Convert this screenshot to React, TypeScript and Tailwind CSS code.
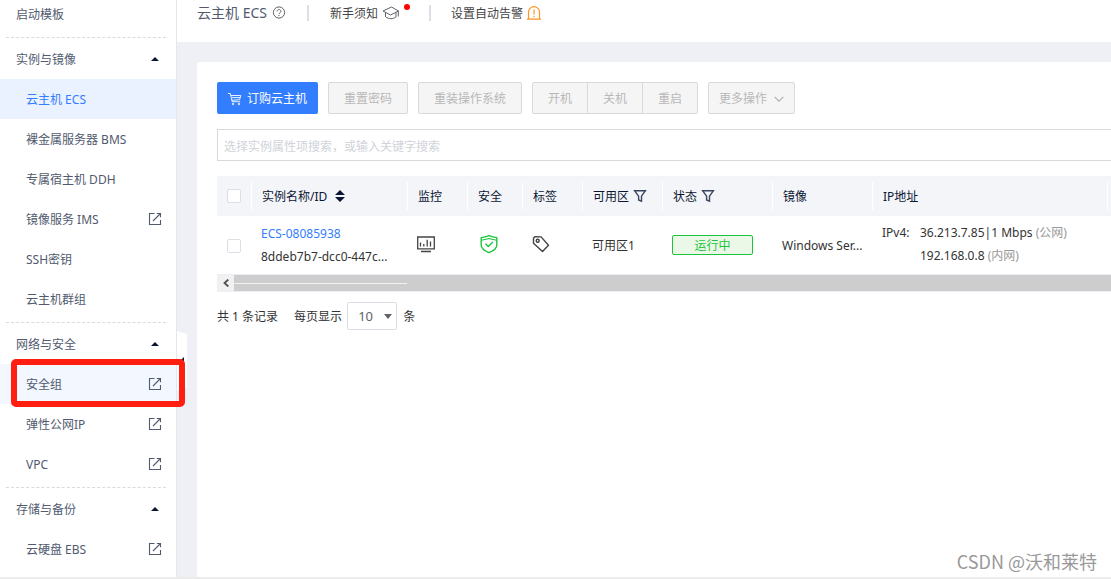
import type { ReactNode } from 'react'

const menu = [
  {
    title: '实例与镜像',
    items: [
      { name: '云主机 ECS', active: true },
      { name: '裸金属服务器 BMS' },
      { name: '专属宿主机 DDH' },
      { name: '镜像服务 IMS', external: true },
      { name: 'SSH密钥' },
      { name: '云主机群组' },
    ],
  },
  {
    title: '网络与安全',
    items: [
      { name: '安全组', external: true, marked: true },
      { name: '弹性公网IP', external: true },
      { name: 'VPC', external: true },
    ],
  },
  {
    title: '存储与备份',
    items: [{ name: '云硬盘 EBS', external: true }],
  },
]

type Item = { name: string; active?: boolean; external?: boolean; marked?: boolean }

const ExternalIcon = () => (
  <svg className="h-3.5 w-3.5" viewBox="0 0 14 14" fill="none" stroke="#515a6e" strokeWidth="1.1">
    <path d="M6.5 1.500H1.500v11h11V8" />
    <path d="M5 9l7.500-7.500M8.800 1.500h3.700v3.700" />
  </svg>
)

const FilterIcon = () => (
  <svg className="h-3.5 w-3.5" viewBox="0 0 14 14" fill="none" stroke="#3a4560" strokeWidth="1.4">
    <path d="M1.6 1.7h10.8L8.5 7.2v5L5.6 11V7.2z" />
  </svg>
)

const Divider = () => (
  <div className="pt-[3px] pb-px pl-1.5 pr-2.5">
    <div className="border-t border-dashed border-[#d8dadf]" />
  </div>
)

const MenuItem = ({ name, active, external, marked }: Item) => {
  const state = active
    ? 'bg-[#eaf1ff] text-[#337dff]'
    : marked
      ? 'bg-[#f3f7ff] text-[#515a6e]'
      : 'text-[#515a6e]'
  return (
    <li className="relative">
      <a href="#" className={`flex h-10 items-center justify-between pl-[26px] pr-3.5 ${state}`}>
        <span className="pt-0.5">{name}</span>
        {external && <ExternalIcon />}
      </a>
      {marked && (
        <div className="pointer-events-none absolute -top-[5px] -bottom-[3px] left-[11px] -right-[9px] z-20 rounded-[5px] border-6 border-[#ff1e10]" />
      )}
    </li>
  )
}

const Sidebar = () => (
  <nav className="relative w-[177px] shrink-0 border-r border-[#e4e7ed] bg-white">
    <a href="#" className="mb-1.5 flex h-7 items-center pt-0.5 pl-4 text-[#515a6e]">启动模板</a>
    {menu.map((group) => (
      <section key={group.title}>
        <Divider />
        <button type="button" className="flex h-10 w-full items-center justify-between pl-4 pr-[17px] text-[#515a6e]">
          <span className="pt-0.5">{group.title}</span>
          <svg className="h-1 w-2" viewBox="0 0 8 4"><path d="M4 0l4 4H0z" fill="#0b1633" /></svg>
        </button>
        <ul>
          {group.items.map((item) => <MenuItem key={item.name} {...item} />)}
        </ul>
      </section>
    ))}
    <button type="button" aria-label="收起菜单" className="absolute top-[331px] left-full z-10 ml-px">
      <svg className="h-15 w-2.5" viewBox="0 0 10 60">
        <path d="M0 0l10 3v54L0 60z" fill="#fff" />
        <path d="M7 26v8l-4-4z" fill="#0b1633" />
      </svg>
    </button>
  </nav>
)

const Header = () => (
  <header className="flex h-[42px] items-start bg-white pl-5 text-[#515a6e]">
    <div className="flex h-[26px] items-center">
      <h1 className="text-sm text-[#515a6e]">云主机 ECS</h1>
      <svg className="ml-[5px] h-3.5 w-3.5" viewBox="0 0 14 14" fill="none" stroke="#606266">
        <circle cx="7" cy="6.5" r="5.6" />
        <path d="M5.1 5.4c0-2.5 3.8-2.4 3.8 0 0 1.4-1.9 1.3-1.9 2.8M7 9v1.1" />
      </svg>
      <div className="mx-[21px] h-4 w-0.5 bg-[#dcdfe6]" />
      <a href="#" className="flex items-center text-[#444]">
        <span className="pt-0.5">新手须知</span>
        <svg className="ml-1 h-4 w-[18px]" viewBox="0 0 18 16" fill="none" stroke="#606266" strokeLinejoin="round">
          <path d="M1 6l8.500-4L16.500 6 8.500 10z" />
          <path d="M3.500 7.500v4.300c3.400 2.600 7.400 2.400 10.500 0V7.500M16.300 6v5.500" />
        </svg>
        <span className="mb-3 ml-1 h-1.5 w-1.5 rounded-full bg-[#f00]" />
      </a>
      <div className="mx-[19px] h-4 w-0.5 bg-[#dcdfe6]" />
      <a href="#" className="flex items-center pl-px text-[#444]">
        <span className="pt-0.5">设置自动告警</span>
        <svg className="ml-1 h-3.5 w-3.5" viewBox="0 0 14 14" fill="none" stroke="#ff9421" strokeWidth="1.2">
          <path d="M1.500 13V6.200a5.500 5.500 0 0 1 11 0V13M0 13.200h14M7 3.500v5M7 9.800v1.400" />
        </svg>
      </a>
    </div>
  </header>
)

const ToolButton = ({ children, className = '' }: { children: ReactNode; className?: string }) => (
  <button type="button" disabled className={`flex h-8 items-center border border-[#d9d9d9] bg-[#f5f5f5] px-[15px] pt-0.5 text-[#b8b8b8] ${className}`}>
    {children}
  </button>
)

const Toolbar = () => (
  <div className="flex gap-2.5">
    <button type="button" className="flex h-8 items-center rounded-[2px] bg-[#337dff] px-[11px] pt-0.5 text-white">
      <svg className="mr-[5px] h-3.5 w-3.5" viewBox="0 0 14 14" fill="none" stroke="#fff" strokeWidth="0.9">
        <path d="M0 1.5h2.3l1.9 8.2h8M2.8 3.5h10l-1.2 4.2-7.8.6M4 5.6h8" />
        <circle cx="5" cy="12" r="0.8" />
        <circle cx="11" cy="12" r="0.8" />
      </svg>
      订购云主机
    </button>
    <ToolButton className="rounded-[2px]">重置密码</ToolButton>
    <ToolButton className="rounded-[2px]">重装操作系统</ToolButton>
    <div className="flex">
      <ToolButton className="rounded-l-[2px]">开机</ToolButton>
      <ToolButton className="-ml-px">关机</ToolButton>
      <ToolButton className="-ml-px rounded-r-[2px]">重启</ToolButton>
    </div>
    <button type="button" disabled className="flex h-8 items-center rounded-[2px] border border-[#d9d9d9] bg-[#f5f5f5] px-2.5 pt-0.5 text-[#b8b8b8]">
      更多操作
      <svg className="ml-[7px] h-2.5 w-2.5" viewBox="0 0 10 10" fill="none" stroke="#b0b0b0" strokeWidth="1.1">
        <path d="M.6 2.8L5 7.2l4.4-4.4" />
      </svg>
    </button>
  </div>
)

const Th = ({ children }: { children?: ReactNode }) => (
  <th scope="col" className="h-10 p-0 text-left font-normal">
    <div className="flex h-7 items-center border-r border-white pl-2.5">{children}</div>
  </th>
)

const Check = ({ label }: { label: string }) => (
  <input type="checkbox" aria-label={label} className="block h-3.5 w-3.5 appearance-none rounded-[2px] border border-[#dcdfe6] bg-white" />
)

const InstanceTable = () => (
  <table className="mt-[15px] w-full table-fixed border-collapse">
    <colgroup>
      <col className="w-[35px]" />
      <col className="w-[156px]" />
      <col className="w-[60px]" />
      <col className="w-[55px]" />
      <col className="w-[60px]" />
      <col className="w-[80px]" />
      <col className="w-[110px]" />
      <col className="w-[100px]" />
      <col className="w-[235px]" />
      <col />
    </colgroup>
    <thead className="bg-[#f3f5f8] text-[#0b1633]">
      <tr>
        <Th><Check label="全选" /></Th>
        <Th>
          <span className="pt-0.5">实例名称/ID</span>
          <svg className="ml-2 h-3 w-2.5" viewBox="0 0 10 12" fill="#0b1633">
            <path d="M5 0l5 5H0zM5 12l5-5H0z" />
          </svg>
        </Th>
        <Th><span className="pt-0.5">监控</span></Th>
        <Th><span className="pt-0.5">安全</span></Th>
        <Th><span className="pt-0.5">标签</span></Th>
        <Th><span className="mr-1 pt-0.5">可用区</span><FilterIcon /></Th>
        <Th><span className="mr-1 pt-0.5">状态</span><FilterIcon /></Th>
        <Th><span className="pt-0.5">镜像</span></Th>
        <Th><span className="pt-0.5">IP地址</span></Th>
        <td />
      </tr>
    </thead>
    <tbody className="text-[#333]">
      <tr className="h-[58px]">
        <td className="pt-0.5 pl-2.5"><Check label="选择 ECS-08085938" /></td>
        <td className="pl-[9px] leading-[23px]">
          <a href="#" className="text-[#337dff]">ECS-08085938</a>
          <p>8ddeb7b7-dcc0-447c...</p>
        </td>
        <td className="pb-0.5 pl-[9px]">
          <svg className="h-[18px] w-[18px]" viewBox="0 0 18 18" fill="none" stroke="#444" strokeWidth="1.3">
            <path d="M.7 2h16.6v11.800H.7zM4 16.500h10" />
            <path d="M3.500 7.500v4M6.800 9v2.500M10.200 4.800v6.700M13.500 6.500v5" />
          </svg>
        </td>
        <td className="pb-0.5 pl-[11px]">
          <svg className="h-5 w-5" viewBox="0 0 20 20" fill="none" stroke="#1bc43c" strokeWidth="1.400" strokeLinejoin="round">
            <path d="M10 1.600c2.500 1 5 1.600 7.800 2v7.400c0 3.500-3.400 5.900-7.800 7.600-4.400-1.700-7.800-4.100-7.800-7.600V3.600c2.800-.4 5.300-1 7.800-2z" />
            <path d="M2.200 6.200c2.800-.3 5.300-.9 7.800-1.700 2.500.8 5 1.400 7.800 1.700" strokeWidth="1.100" />
            <path d="M6.500 9.800l2.800 2.700 4.600-4.600" />
          </svg>
        </td>
        <td className="pb-0.5 pl-[9px]">
          <svg className="h-[18px] w-[18px]" viewBox="0 0 18 18" fill="none" stroke="#444" strokeWidth="1.4" strokeLinejoin="round">
            <path d="M1.500 3.200l1.400-1.600 6.200.3 7.400 8.300-6 6.300-9-8.300z" />
            <circle cx="5.700" cy="5.700" r="1.500" />
          </svg>
        </td>
        <td className="pt-0.5 pl-[9px]">可用区1</td>
        <td className="pl-[9px]">
          <div className="flex h-5 w-[81px] items-center justify-center rounded-[2px] border border-[#1bc43c] bg-[#ebf8e8] pt-0.5 text-[#1bc43c]">运行中</div>
        </td>
        <td className="pt-0.5 pl-[9px] whitespace-nowrap">Windows Ser...</td>
        <td className="pl-[9px] pb-0.5 align-middle leading-[23px]">
          <div className="flex">
            <span className="w-[38px]">IPv4:</span>
            <div>
              <p>36.213.7.85|1 Mbps <span className="text-[#999]">(公网)</span></p>
              <p>192.168.0.8 <span className="text-[#999]">(内网)</span></p>
            </div>
          </div>
        </td>
        <td />
      </tr>
    </tbody>
  </table>
)

const ScrollBar = () => (
  <div className="flex h-[18px] border-y border-[#ebeef5] bg-[#cdcdcd]">
    <button type="button" aria-label="向左滚动" className="flex w-[17px] items-center justify-center bg-[#f1f1f1]">
      <svg className="h-2 w-1.5" viewBox="0 0 6 8" fill="none" stroke="#505050" strokeWidth="1.8">
        <path d="M5.300 .5L1.500 4l3.800 3.500" />
      </svg>
    </button>
    <div className="h-px w-[173px] self-center bg-[#f1f1f1]" />
  </div>
)

const Pagination = () => (
  <div className="mt-2.5 flex items-center text-[#333]">
    <span className="pt-0.5">共 1 条记录</span>
    <label htmlFor="page-size" className="ml-4 pt-0.5">每页显示</label>
    <div className="relative mr-1.5 ml-[5px]">
      <select id="page-size" defaultValue="10" className="block h-7 w-[50px] appearance-none rounded-[2px] border border-[#dcdfe6] bg-white pt-0.5 pl-2.5 text-[13px] text-[#606266]">
        <option>10</option>
        <option>20</option>
        <option>50</option>
      </select>
      <svg className="pointer-events-none absolute top-3 right-[5px] h-[5px] w-2" viewBox="0 0 8 5"><path d="M0 0h8L4 5z" fill="#606266" /></svg>
    </div>
    <span className="pt-0.5">条</span>
  </div>
)

const App = () => {
  return (
    <div className="relative flex h-screen flex-col overflow-hidden border-b-2 border-[#ebebeb] bg-white font-['Noto_Sans','Noto_Sans_CJK_SC',sans-serif] text-xs">
      <div className="flex min-h-0 flex-1">
        <Sidebar />
        <div className="flex min-w-0 flex-1 flex-col bg-[#eff0f5]">
          <Header />
          <main className="mt-5 ml-5 flex-1 rounded-tl-[2px] bg-white pt-5 pl-5">
            <Toolbar />
            <input
              type="text"
              aria-label="搜索实例"
              placeholder="选择实例属性项搜索，或输入关键字搜索"
              className="mt-[15px] block h-8 w-full border border-r-0 border-[#d9d9d9] px-1.5 pt-0.5 placeholder:text-[#d0d3d9]"
            />
            <InstanceTable />
            <ScrollBar />
            <Pagination />
          </main>
        </div>
      </div>
      <p className="absolute right-3.5 bottom-0.5 font-['Noto_Sans_CJK_SC',sans-serif] text-lg text-[#999]">CSDN @沃和莱特</p>
    </div>
  )
}

export default App
